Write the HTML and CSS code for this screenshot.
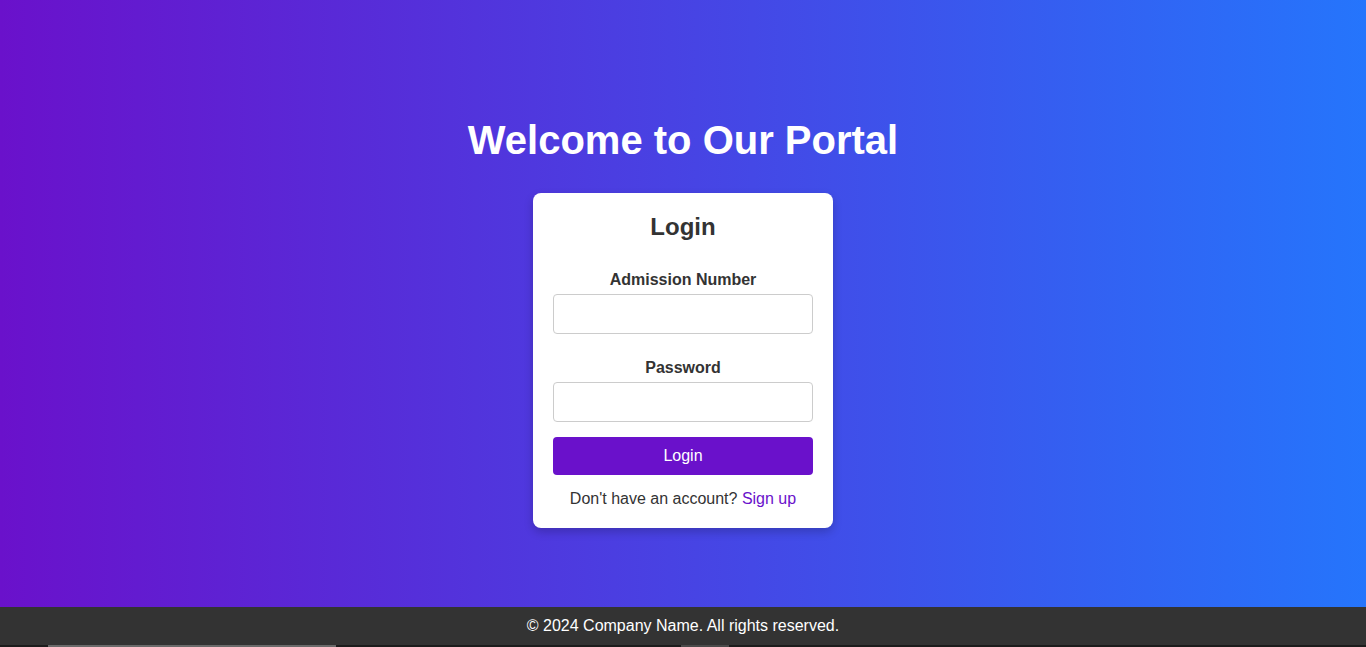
FILE: index.html
```html
<!DOCTYPE html>
<html lang="en">
<head>
<meta charset="utf-8">
<title>Portal Login</title>
<link rel="stylesheet" href="styles.css">
</head>
<body>
<main class="main">
  <h1 class="title">Welcome to Our Portal</h1>
  <div class="card">
    <h2 class="card-title">Login</h2>
    <form class="form">
      <div class="group">
        <label class="label" for="adm">Admission Number</label>
        <input class="input" id="adm" type="text">
      </div>
      <div class="group">
        <label class="label" for="pwd">Password</label>
        <input class="input" id="pwd" type="password">
      </div>
      <button class="btn" type="button">Login</button>
    </form>
    <p class="signup">Don't have an account? <a class="link" href="#">Sign up</a></p>
  </div>
</main>
<footer class="footer">&copy; 2024 Company Name. All rights reserved.</footer>
<div class="strip"><span class="seg1"></span><span class="seg2"></span></div>
</body>
</html>
```
FILE: styles.css
```css
* { box-sizing: border-box; }
html, body { margin: 0; padding: 0; }
body {
  font-family: "Liberation Sans", Arial, sans-serif;
  color: #333;
  height: 647px;
  overflow: hidden;
  display: flex;
  flex-direction: column;
}
.main {
  height: 607px;
  flex: none;
  background: linear-gradient(to right, #6a11cb, #2575fc);
  display: flex;
  flex-direction: column;
  align-items: center;
  padding-top: 117px;
}
.title {
  margin: 0 0 30px;
  color: #fff;
  font-size: 40px;
  line-height: 46px;
  font-weight: bold;
}
.card {
  width: 300px;
  background: #fff;
  border-radius: 8px;
  padding: 20px 20px 20px;
  box-shadow: 0 4px 10px rgba(0, 0, 0, 0.2);
  text-align: center;
}
.card-title {
  margin: 0 0 30px;
  font-size: 24px;
  line-height: 28px;
  font-weight: bold;
}
.form { display: flex; flex-direction: column; }
.group { display: flex; flex-direction: column; margin-bottom: 15px; }
.group + .group { margin-top: 10px; }
.label {
  font-weight: bold;
  font-size: 16px;
  line-height: 18px;
  margin-bottom: 5px;
}
.input {
  height: 40px;
  width: 100%;
  border: 1px solid #ccc;
  border-radius: 4px;
  padding: 10px;
  font-size: 16px;
  font-family: inherit;
}
.btn {
  height: 38px;
  width: 100%;
  border: none;
  border-radius: 4px;
  background: #6a11cb;
  color: #fff;
  font-size: 16px;
  font-family: inherit;
}
.signup {
  margin: 15px 0 0;
  font-size: 16px;
  line-height: 18px;
}
.link { color: #6a11cb; text-decoration: none; }
.footer {
  height: 38px;
  flex: none;
  background: #333;
  color: #fff;
  font-size: 16px;
  display: flex;
  align-items: center;
  justify-content: center;
}
.strip {
  height: 2px;
  flex: none;
  background: #1c1c1c;
  display: flex;
}
.seg1 { margin-left: 48px; width: 288px; background: #6a6a6a; }
.seg2 { margin-left: 345px; width: 48px; background: #4a4a4a; }
```
